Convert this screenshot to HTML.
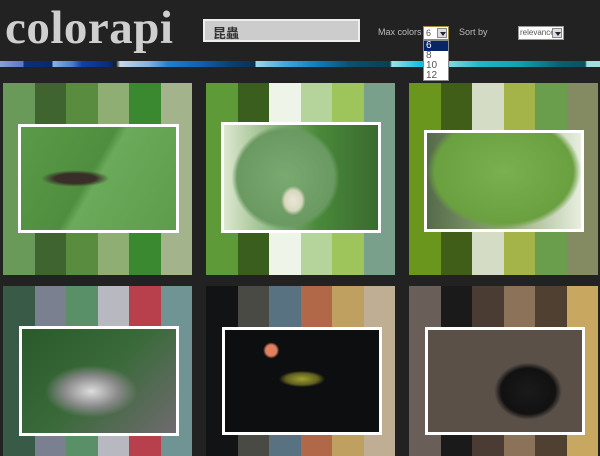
<!DOCTYPE html>
<html><head><meta charset="utf-8"><style>
*{margin:0;padding:0;box-sizing:border-box}
body{width:600px;height:456px;background:#222;overflow:hidden;position:relative;font-family:"Liberation Sans",sans-serif}
.logo{position:absolute;left:5px;top:1px;font:bold 47px "Liberation Serif",serif;color:#cfcfcf;letter-spacing:0.5px}
.search{position:absolute;left:203px;top:19px;width:157px;height:23px;background:#ccc;border:2px solid #eee;font:13px "Liberation Sans","Noto Sans CJK TC",sans-serif;color:#333;padding:2px 0 0 8px;font-weight:bold}
.lbl{position:absolute;top:27px;font-size:9px;color:#bbb;white-space:nowrap}
.sel{position:absolute;top:26px;height:14px;background:#fff;border:1px solid #a08a40;font-size:9px;color:#555;padding-left:2px;line-height:12px;white-space:nowrap;overflow:hidden}
.sel i{position:absolute;right:1px;top:1px;width:10px;height:10px;background:#ddd;border:1px solid #888}
.sel i:after{content:"";position:absolute;left:2px;top:3px;border:3px solid transparent;border-top:4px solid #223;border-bottom:0}
.dd{position:absolute;left:423px;top:40px;width:26px;height:41px;background:#fff;border:1px solid #888;font-size:10px;line-height:10px;color:#555}
.dd div{padding-left:2px}
.dd .on{background:#0a246a;color:#fff}
.strip{position:absolute;left:0;top:61px;width:600px;height:6px;background:linear-gradient(90deg,#8aa0d8 0,#5a78c8 23px,#0a3080 24px,#08286a 52px,#8ab0e0 53px,#4a80d0 72px,#1040a8 82px,#0a2a78 110px,#1a1a1a 116px,#c8d8e8 120px,#80b0e0 150px,#2080d0 168px,#1060b0 200px,#0a4070 230px,#0a3050 255px,#a0d8e8 256px,#40a8e0 285px,#1080c0 315px,#0a5070 350px,#084050 390px,#a0e0e8 392px,#10c0e0 420px,#10b0d0 448px,#80d8e0 450px,#20b8c8 480px,#10a0b0 520px,#086070 560px,#0a5060 585px,#a0e0e0 587px)}
.card{position:absolute;display:flex}
.card div{flex:1}
.ph{position:absolute;border:3px solid #fff}
</style></head><body>
<div class="logo">colorapi</div>
<div class="search">昆蟲</div>
<div class="lbl" style="left:378px">Max colors</div>
<div class="sel" style="left:423px;width:26px">6<i></i></div>
<div class="lbl" style="left:459px">Sort by</div>
<div class="sel" style="left:518px;width:46px;border-color:#999;font-size:8px;padding-left:1px">relevance<i></i></div>
<div class="strip"></div>
<div class="dd"><div class="on">6</div><div>8</div><div>10</div><div>12</div></div>

<div class="card" style="left:3px;top:83px;width:189px;height:192px"><div style="background:#6a9a5a"></div><div style="background:#3f6430"></div><div style="background:#5a8c40"></div><div style="background:#8fae74"></div><div style="background:#3a8830"></div><div style="background:#a3b38c"></div></div>
<div class="card" style="left:206px;top:83px;width:189px;height:192px"><div style="background:#5e9a38"></div><div style="background:#3a5e1e"></div><div style="background:#eef4e8"></div><div style="background:#b4d49c"></div><div style="background:#9ec45c"></div><div style="background:#78a08a"></div></div>
<div class="card" style="left:409px;top:83px;width:189px;height:192px"><div style="background:#6a961e"></div><div style="background:#405e18"></div><div style="background:#d4dcc6"></div><div style="background:#a4b448"></div><div style="background:#6a9e4c"></div><div style="background:#848a62"></div></div>
<div class="card" style="left:3px;top:286px;width:189px;height:170px"><div style="background:#3a5a48"></div><div style="background:#7a8090"></div><div style="background:#5a9068"></div><div style="background:#b8b8c0"></div><div style="background:#b8404c"></div><div style="background:#709494"></div></div>
<div class="card" style="left:206px;top:286px;width:189px;height:170px"><div style="background:#121314"></div><div style="background:#4a4a44"></div><div style="background:#587282"></div><div style="background:#b06848"></div><div style="background:#c0a060"></div><div style="background:#c0ae94"></div></div>
<div class="card" style="left:409px;top:286px;width:189px;height:170px"><div style="background:#6a5e58"></div><div style="background:#1a1a1a"></div><div style="background:#4a3c32"></div><div style="background:#8c7258"></div><div style="background:#504032"></div><div style="background:#c8a860"></div></div>

<div class="ph" style="left:18px;top:124px;width:161px;height:109px;background:radial-gradient(ellipse 22% 8% at 35% 50%,#3a2e28 0,#3a2e28 60%,transparent 100%),linear-gradient(120deg,#5a9a48 0,#4e8e3e 45%,#6aaa5a 50%,#5c9c4a 100%)"></div>
<div class="ph" style="left:221px;top:122px;width:160px;height:111px;background:radial-gradient(ellipse 8% 14% at 45% 72%,#e8e8d8 0,#d8d8c0 70%,transparent 100%),radial-gradient(ellipse 35% 50% at 40% 50%,#7aaa70 0,#6a9a62 90%,transparent 100%),linear-gradient(90deg,#dde8d0,#4a8a3a 60%,#3a6a30)"></div>
<div class="ph" style="left:424px;top:130px;width:160px;height:102px;background:radial-gradient(ellipse 50% 60% at 50% 40%,#7ab050 0,#6aa040 90%,transparent 100%),linear-gradient(90deg,#556a4a,#90a878 50%,#e8eee0)"></div>
<div class="ph" style="left:19px;top:326px;width:160px;height:110px;background:radial-gradient(ellipse 30% 25% at 45% 60%,#ddd 0,#888 60%,transparent 100%),linear-gradient(135deg,#2a5a2a,#3a6a3a 50%,#706a70)"></div>
<div class="ph" style="left:222px;top:327px;width:160px;height:108px;background:radial-gradient(circle at 30% 20%,#e08060 0,#e08060 4%,transparent 6%),radial-gradient(ellipse 15% 8% at 50% 48%,#a0a030 0,#606020 70%,transparent 100%),#0d0e10"></div>
<div class="ph" style="left:425px;top:327px;width:160px;height:108px;background:radial-gradient(ellipse 22% 28% at 65% 60%,#1a1a1a 0,#111 80%,transparent 100%),#5a5048"></div>
</body></html>
